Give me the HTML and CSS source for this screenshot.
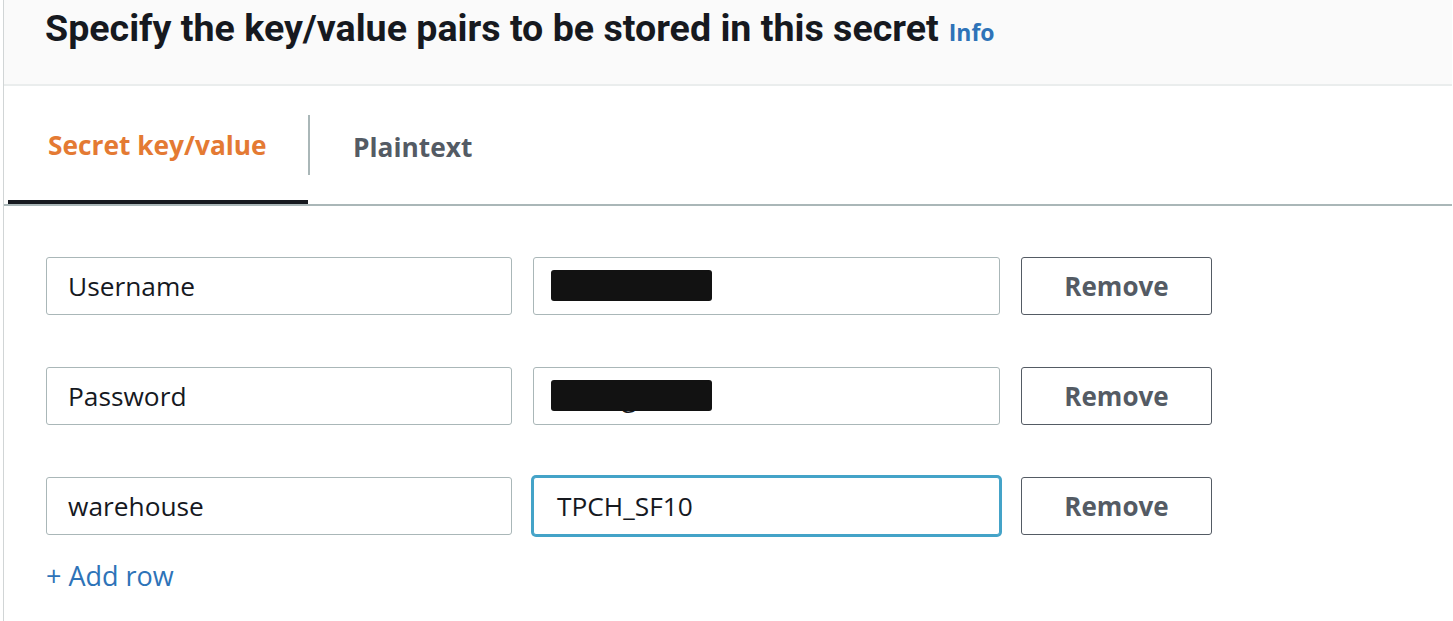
FILE: index.html
```html
<!DOCTYPE html>
<html lang="en">
<head>
<meta charset="utf-8">
<title>Secret key/value</title>
<link rel="stylesheet" href="styles.css">
</head>
<body>
<div class="panel">
  <header class="panel-header">
    <h2 class="title">Specify the key/value pairs to be stored in this secret<a class="info" href="#">Info</a></h2>
  </header>
  <div class="tabs">
    <div class="tab tab-active">Secret key/value</div>
    <div class="tab-sep"></div>
    <div class="tab">Plaintext</div>
  </div>
  <div class="pairs">
    <div class="pair">
      <div class="field key-field">Username</div>
      <div class="field value-field"><span class="mask"></span></div>
      <button class="remove">Remove</button>
    </div>
    <div class="pair">
      <div class="field key-field">Password</div>
      <div class="field value-field"><span class="ghost">g</span><span class="mask"></span></div>
      <button class="remove">Remove</button>
    </div>
    <div class="pair">
      <div class="field key-field">warehouse</div>
      <div class="field value-field focused">TPCH_SF10</div>
      <button class="remove">Remove</button>
    </div>
    <a class="add-row" href="#">+ Add row</a>
  </div>
</div>
</body>
</html>
```
FILE: styles.css
```css
* { box-sizing: border-box; }
html, body { margin: 0; padding: 0; background: #ffffff; }
body { font-family: "Open Sans", "Noto Sans", sans-serif; color: #16191f; }

.panel {
  margin-left: 3px;
  width: 1449px;
  min-height: 621px;
  border-left: 1px solid #d1d5d6;
  background: #ffffff;
}

.panel-header {
  height: 86px;
  background: #fafafa;
  border-bottom: 2px solid #eaeded;
  padding: 6px 0 0 41px;
}
.title {
  margin: 0;
  font-family: Roboto, "Open Sans", sans-serif;
  font-weight: 700;
  font-size: 37.6px;
  line-height: 44px;
  color: #16191f;
  white-space: nowrap;
}
.info {
  margin-left: 10px;
  font-family: "Open Sans", sans-serif;
  font-size: 23px;
  font-weight: 700;
  color: #2e73b8;
  text-decoration: none;
}

.tabs {
  display: flex;
  align-items: center;
  height: 120px;
  border-bottom: 2px solid #aab7b8;
}
.tab {
  font-size: 26.3px;
  font-weight: 700;
  color: #545b64;
  padding-top: 3px;
}
.tab-active {
  margin-left: 4px;
  width: 300px;
  height: 118px;
  padding-left: 40px;
  display: flex;
  align-items: center;
  color: #e47a33;
  border-bottom: 4px solid #16191f;
  align-self: flex-start;
}
.tab-sep {
  width: 2px;
  height: 60px;
  background: #aab7b8;
  margin-right: 43px;
}

.pairs {
  padding: 51px 0 0 42px;
  display: flex;
  flex-direction: column;
  gap: 52px;
}
.pair {
  display: flex;
  gap: 21px;
  height: 58px;
}
.field {
  height: 58px;
  border: 1px solid #aab7b8;
  border-radius: 3px;
  display: flex;
  align-items: center;
  padding-left: 21px;
  font-size: 26.3px;
  color: #16191f;
  background: #ffffff;
}
.key-field { width: 466px; }
.value-field { width: 467px; position: relative; }
.value-field.focused {
  border-color: #44a3c8;
  box-shadow: 0 0 0 2px #44a3c8;
  padding-left: 23px;
}
.mask {
  position: absolute;
  left: 17px;
  top: 12px;
  width: 161px;
  height: 31px;
  background: #121212;
  border-radius: 3px;
}
.ghost {
  margin-left: 67px;
  margin-top: 2px;
}
.remove {
  width: 191px;
  height: 58px;
  border: 1px solid #545b64;
  border-radius: 3px;
  background: #ffffff;
  color: #545b64;
  font-family: "Open Sans", sans-serif;
  font-size: 26px;
  font-weight: 700;
  padding: 0;
  cursor: pointer;
}
.add-row {
  margin-top: -30px;
  align-self: flex-start;
  font-size: 27px;
  color: #2e73b8;
  text-decoration: none;
}
```
